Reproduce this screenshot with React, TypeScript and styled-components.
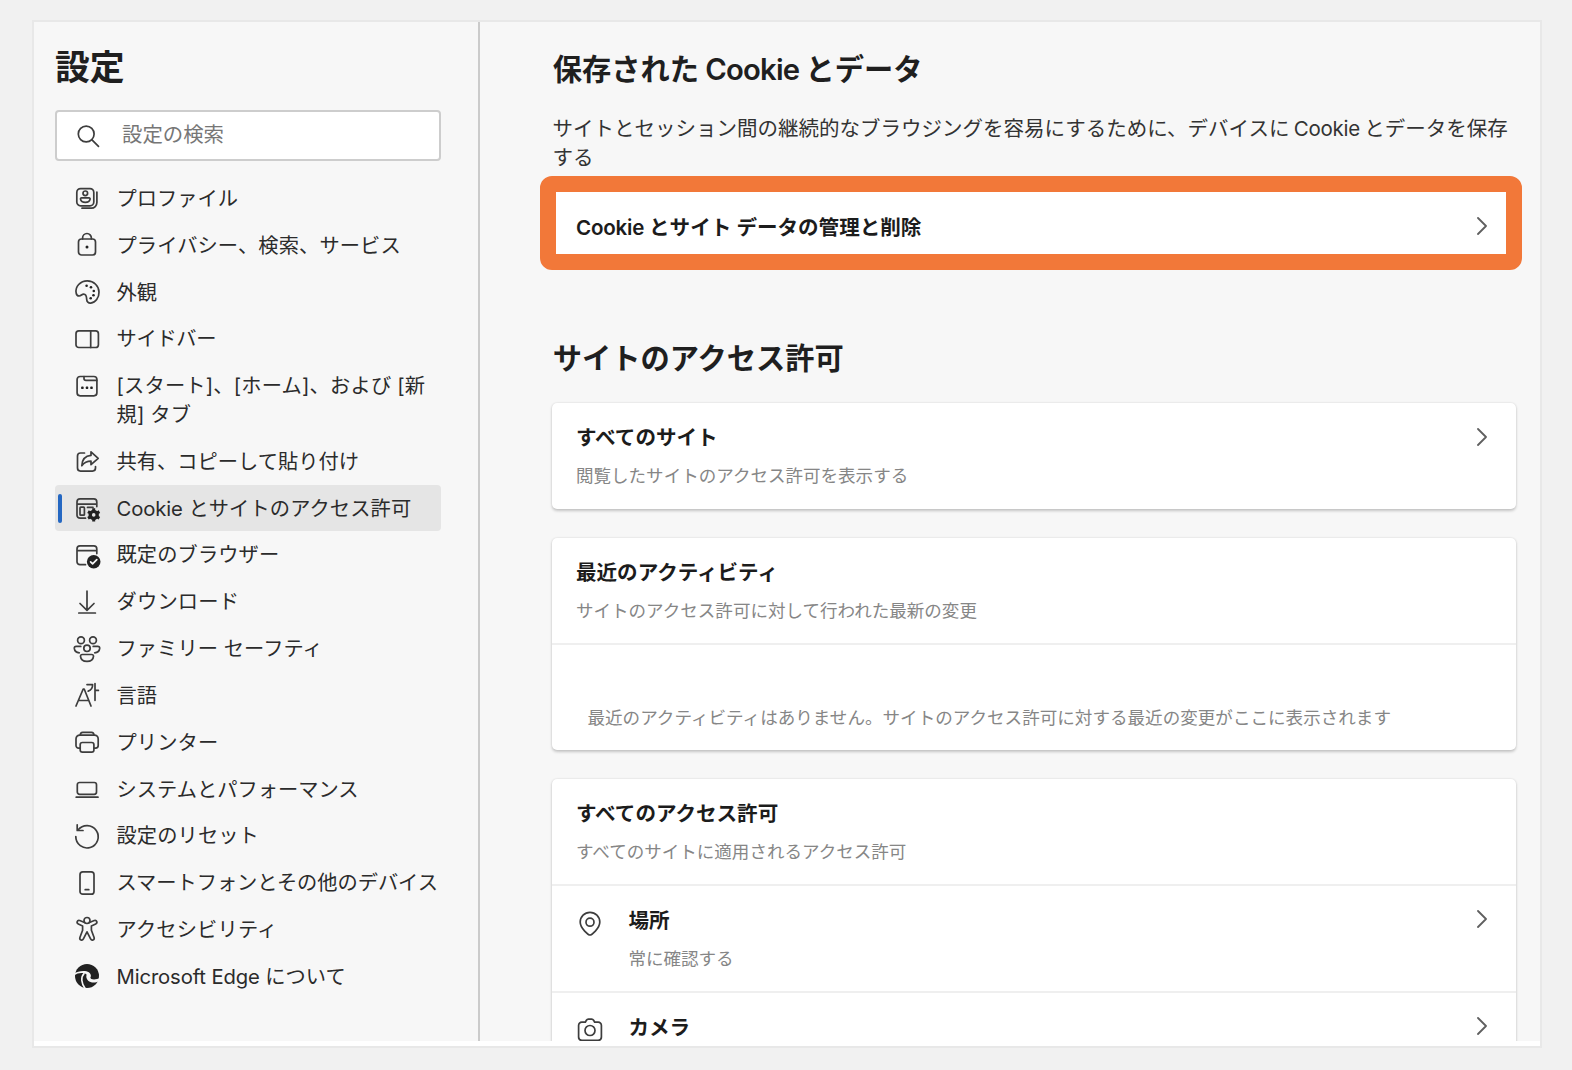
import React from "react";
import styled, { createGlobalStyle } from "styled-components";

const GlobalStyle = createGlobalStyle`
  *, *::before, *::after { box-sizing: border-box; }
  html, body { margin: 0; padding: 0; background: #f1f1f1; }
  body {
    height: 1070px;
    overflow: hidden;
    font-family: Inter, "Noto Sans CJK JP", sans-serif;
    color: #1f1f1f;
  }
  h1, h2, h3, p { margin: 0; }
`;

const Page = styled.div`
  width: 1572px;
  height: 1070px;
  padding: 20px 30px 22px 32px;
  background: #f1f1f1;
`;

const Frame = styled.div`
  width: 1510px;
  height: 1028px;
  padding-bottom: 5px;
  border: 2px solid #e8e8e8;
  background: #fff;
`;

const Shell = styled.div`
  display: flex;
  height: 1019px;
  overflow: hidden;
  background: #f7f7f7;
`;

const Sidebar = styled.aside`
  flex: none;
  width: 446px;
  padding: 20px 37px 0 21px;
  border-right: 2px solid #cbcbcb;
`;

const SidebarTitle = styled.h1`
  height: 50px;
  font-size: 34.8px;
  line-height: 50px;
  font-weight: 700;
`;

const SearchBox = styled.div`
  display: flex;
  align-items: center;
  width: 386px;
  height: 51px;
  margin-top: 18px;
  padding-left: 16px;
  border: 2px solid #cdcdcd;
  border-radius: 4px;
  background: #fff;
  font-size: 20.4px;
  color: #767676;
`;

const SearchLabel = styled.span`
  margin-left: 19px;
  padding-bottom: 5px;
`;

const Nav = styled.nav`
  display: flex;
  flex-direction: column;
  width: 386px;
  margin-top: 14px;
`;

const NavRow = styled.a<{ $active?: boolean }>`
  position: relative;
  display: flex;
  align-items: flex-start;
  padding: 9px 0 9px 17px;
  border-radius: 4px;
  background: ${(p) => (p.$active ? "#e5e5e5" : "transparent")};
`;

const ActiveMark = styled.span`
  position: absolute;
  left: 3px;
  top: 9px;
  width: 4px;
  height: 29px;
  border-radius: 2px;
  background: #2467c2;
`;

const NavIcon = styled.svg`
  flex: none;
  width: 30px;
  height: 30px;
  margin-top: -0.6px;
  margin-bottom: -0.6px;
  fill: none;
  stroke: #3d3d3d;
  stroke-width: 1.7;
  stroke-linecap: round;
  stroke-linejoin: round;
`;

const NavLabel = styled.span<{ $spacing?: number }>`
  width: 324px;
  margin: 1px 0 -1px 14.5px;
  font-size: 20.25px;
  line-height: 28.8px;
  letter-spacing: ${(p) => p.$spacing ?? 0}px;
  color: #2b2b2b;
  white-space: pre;
`;

const Main = styled.main`
  flex: 1;
  min-width: 0;
  padding: 28px 24px 0 72px;
`;

const SectionTitle = styled.h2<{ $top?: number }>`
  height: 40px;
  margin-top: ${(p) => p.$top ?? 0}px;
  padding-left: 0.8px;
  font-size: 29.25px;
  line-height: 40px;
  font-weight: 600;
  white-space: pre;
`;

const Latin = styled.span<{ $tight: number; $word?: number }>`
  letter-spacing: -${(p) => p.$tight}px;
  word-spacing: -${(p) => p.$word ?? 0}px;
`;

const Description = styled.div`
  height: 58px;
  margin-top: 24px;
  padding-left: 0.5px;
  font-size: 20.5px;
  line-height: 29px;
  color: #333;
  white-space: pre;
`;

const Highlight = styled.div`
  display: flex;
  align-items: center;
  justify-content: space-between;
  width: 982px;
  height: 94px;
  margin: 4px 0 0 -12px;
  padding: 9px 19px 0 20px;
  border: 16px solid #f27839;
  border-radius: 12px;
  background: #fff;
`;

const CardList = styled.div`
  display: flex;
  flex-direction: column;
  gap: 29px;
  margin-top: 24px;
`;

const Card = styled.section`
  width: 964px;
  border-radius: 5px;
  background: #fff;
  box-shadow: 0 1.5px 3px rgba(0, 0, 0, 0.2), 0 0 2px rgba(0, 0, 0, 0.08);
`;

const CardRow = styled.div<{ $divided?: boolean; $height?: number }>`
  display: flex;
  align-items: flex-start;
  height: ${(p) => p.$height ?? 106}px;
  padding: 18px 29px 0 24px;
  border-top: ${(p) => (p.$divided ? "2px solid #efefef" : "0")};
`;

const RowText = styled.div`
  flex: 1;
  padding-top: 1px;
`;

const RowTitle = styled.h3`
  font-size: 20.55px;
  line-height: 32px;
  font-weight: 600;
  color: #1c1c1c;
  white-space: pre;
`;

const RowSub = styled.p`
  margin-top: 8px;
  font-size: 17.55px;
  line-height: 28px;
  color: #868686;
  white-space: pre;
`;

const EmptyNote = styled.div`
  height: 107px;
  padding: 58.5px 0 0 35.5px;
  border-top: 2px solid #efefef;
  font-size: 17.57px;
  line-height: 28px;
  color: #868686;
  white-space: pre;
`;

const PermissionIcon = styled(NavIcon)`
  margin: 4px 23px 0 -0.6px;
`;

const ChevronSvg = styled.svg<{ $top?: number }>`
  flex: none;
  width: 10px;
  height: 18px;
  margin-top: ${(p) => p.$top ?? 7}px;
  fill: none;
  stroke: #5f5f5f;
  stroke-width: 1.8;
  stroke-linecap: round;
  stroke-linejoin: round;
`;

const Chevron = ({ top }: { top?: number }) => (
  <ChevronSvg $top={top} viewBox="0 0 10 18">
    <path d="M1 1 9 9 1 17" />
  </ChevronSvg>
);

const dark = { fill: "#222", stroke: "none" };

const icons: Record<string, React.ReactNode> = {
  profile: (
    <>
      <rect x="4.8" y="5.6" width="17" height="17.2" rx="3.8" />
      <path d="M24.9 9v10.6a5.6 5.6 0 0 1-5.6 5.6H10" />
      <circle cx="13.3" cy="10.3" r="2.3" />
      <path d="M9.6 14.8h7.4c.8 0 1.2.6 1.1 1.3-.4 2-2.3 3.2-4.8 3.2s-4.4-1.2-4.8-3.2c-.1-.7.3-1.3 1.1-1.3Z" />
    </>
  ),
  lock: (
    <>
      <rect x="6.5" y="9" width="17" height="16" rx="3" />
      <path d="M10.6 9V7.900a4.400 4.400 0 0 1 8.800 0V9" />
      <circle cx="15" cy="17" r="1.5" {...dark} />
    </>
  ),
  palette: (
    <>
      <path d="M4.2 16.200C2.800 9.500 8.500 3.900 15.300 3.900 22 4 26.800 9 27 15c.2 5.800-3.600 10.700-8.200 11.100-2.600.2-4-1.400-4.100-3.700-.1-2.700-.4-5.300-3-5.300-1.900 0-2.600 2-4.600 1.900-1.700-.1-2.600-1.400-2.900-2.800Z" />
      <g {...dark}>
        <circle cx="14.6" cy="8.8" r="1.3" />
        <circle cx="19" cy="10.3" r="1.3" />
        <circle cx="21.8" cy="14" r="1.3" />
        <circle cx="21.5" cy="18.3" r="1.3" />
        <circle cx="18.7" cy="21.3" r="1.3" />
      </g>
    </>
  ),
  sidebar: (
    <>
      <rect x="4" y="6.9" width="22.4" height="16.6" rx="2.8" />
      <path d="M18.7 7v16.4" />
    </>
  ),
  tab: (
    <>
      <rect x="5.1" y="5.5" width="19.8" height="19.3" rx="3" />
      <path d="M12 5.7v1.8c0 1.2.7 1.9 1.9 1.9h10.8" />
      <g {...dark}>
        <rect x="9.2" y="15.6" width="2.4" height="2.4" rx=".6" />
        <rect x="13.8" y="15.6" width="2.4" height="2.4" rx=".6" />
        <rect x="18.3" y="15.6" width="2.4" height="2.4" rx=".6" />
      </g>
    </>
  ),
  share: (
    <>
      <path d="M12.5 7H8.500a3 3 0 0 0-3 3v12.100a3 3 0 0 0 3 3h12a3 3 0 0 0 3-3v-1.600" />
      <path d="m19 5.800 7.200 6.500-7.200 6.400v-3.500c-4 0-6.700 1.200-9.200 4.500.3-6 3.500-9.800 9.200-10.300Z" />
    </>
  ),
  cookies: (
    <>
      <path d="M13.5 25.200H8a3 3 0 0 1-3-3V8.900a3 3 0 0 1 3-3h13.800a3 3 0 0 1 3 3v4.700M5 11.200h19.800" />
      <rect x="8" y="14.2" width="4.4" height="8" rx=".8" />
      <path d="M15.5 14.400h5.500" />
      <circle cx="21.7" cy="21.9" r="3.5" fill="none" stroke="#222" strokeWidth="3.400" />
      <path
        stroke="#222"
        strokeWidth="3"
        strokeLinecap="butt"
        d="M21.700 18.500v-3.200M21.700 25.300v3.200M24.600 20.200l2.800-1.600M18.800 23.600l-2.800 1.600M24.600 23.600l2.800 1.600M18.800 20.200l-2.800-1.600"
      />
    </>
  ),
  browser: (
    <>
      <path d="M13.5 24.700H8a3 3 0 0 1-3-3V8.900a3 3 0 0 1 3-3h13.800a3 3 0 0 1 3 3v4.700M5 10.700h19.800" />
      <circle cx="21.7" cy="21.7" r="6.8" {...dark} />
      <path d="m18.600 21.900 2 2 4.200-4.200" stroke="#f7f7f7" />
    </>
  ),
  download: <path d="M15 4.200v19M8 16.500l7 6.800 7-6.800M6.800 26h16.600" />,
  family: (
    <>
      <circle cx="9" cy="6.3" r="3.4" />
      <circle cx="21" cy="6.3" r="3.4" />
      <circle cx="15" cy="14.3" r="3.2" />
      <path d="M8.800 12.400H4.200c-1.300 0-2 .8-1.900 2 .3 2.600 2.300 4.200 5 4.400M21.200 12.400h4.600c1.300 0 2 .8 1.900 2-.3 2.600-2.300 4.200-5 4.400" />
      <path d="M10.300 20.500h9.400c1.200 0 1.900.7 1.800 1.800-.3 3.100-3 5-6.500 5s-6.200-1.900-6.500-5c-.1-1.100.6-1.800 1.800-1.800Z" />
    </>
  ),
  language: (
    <>
      <path d="m4 26 7.200-17h1L19 26M6.500 20.500h10.400" />
      <path d="M15 4.600h5.600c.1 3.200-1.400 5.400-4.400 6.500M23 3.500v16.800M23 10.400h3.400" />
    </>
  ),
  printer: (
    <>
      <path d="M8 21.200H6.600A2.600 2.600 0 0 1 4 18.600v-6.700a3.800 3.800 0 0 1 3.800-3.800h14.600a3.800 3.800 0 0 1 3.800 3.800v6.700a2.600 2.600 0 0 1-2.600 2.600H22" />
      <path d="M8.300 8c0-1.800.8-2.700 2.400-2.700h8.800c1.600 0 2.400.9 2.400 2.700" />
      <rect x="8.2" y="15.5" width="13.7" height="9.6" rx="2.2" />
    </>
  ),
  laptop: (
    <>
      <rect x="5.3" y="8.5" width="19.2" height="11.9" rx="2.3" />
      <path d="M4.200 23.200h21.800" />
    </>
  ),
  reset: (
    <>
      <path d="M6.200 8.800A11.200 11.200 0 1 1 3.800 15.600" />
      <path d="M5.200 3.800v5.700h5.800" />
    </>
  ),
  phone: (
    <>
      <rect x="8" y="3.9" width="14" height="22.3" rx="2.8" />
      <path d="M13.200 21.700h3.600" />
    </>
  ),
  accessibility: (
    <>
      <circle cx="15" cy="6.5" r="3" />
      <path d="M12 8.200 7.700 6.500c-2.500-.8-3.600 2.400-1.400 3.400l4.300 2v4.300l-2.700 7.300c-.7 2.500 2.400 3.600 3.500 1.400L15 17.800l3.600 7.100c1.100 2.200 4.200 1.100 3.500-1.400l-2.700-7.300v-4.300l4.300-2c2.200-1 1.100-4.200-1.400-3.400L18 8.200" />
    </>
  ),
  edge: (
    <>
      <circle cx="15" cy="15" r="12" {...dark} />
      <path
        fill="#f7f7f7"
        stroke="none"
        d="M2 12.400C5.800 9.800 13.500 9 16.800 11.200 19.300 13 19.200 15.300 18.400 16.600 18.200 18.700 23.500 19.600 28.500 16.600L27 20.200C23.500 22.200 18.500 22 16.200 19.800 14.400 18 13.900 15.800 14.600 13.600 11.500 11.400 6 11.600 2 14.600Z"
      />
      <path stroke="#f7f7f7" strokeWidth="1.6" d="M12 12.600C8.700 15.800 9 22.300 13.400 28" />
    </>
  ),
  pin: (
    <>
      <path d="M15 27c-1.200 0-9.800-6.200-9.800-12.900a9.800 9.800 0 0 1 19.600 0C24.800 20.800 16.200 27 15 27Z" />
      <circle cx="15" cy="14.2" r="4" />
    </>
  ),
  camera: (
    <>
      <path d="M10.300 7.200 11.400 5.300c.5-.8 1-1.100 1.900-1.100h3.400c.9 0 1.400.3 1.900 1.100l1.100 1.900h3.500a3.200 3.200 0 0 1 3.200 3.200v11.700a3.200 3.200 0 0 1-3.200 3.200H6.800a3.200 3.200 0 0 1-3.200-3.200V10.400a3.200 3.200 0 0 1 3.200-3.200Z" />
      <circle cx="15" cy="15.5" r="5" />
    </>
  ),
  search: (
    <>
      <circle cx="13.2" cy="13" r="7.9" />
      <path d="m19 18.900 6.500 6.400" />
    </>
  ),
};

type NavItem = {
  icon: string;
  label: React.ReactNode;
  spacing?: number;
  active?: boolean;
};

const navItems: NavItem[] = [
  { icon: "profile", label: "プロファイル" },
  { icon: "lock", label: "プライバシー、検索、サービス", spacing: 0.1 },
  { icon: "palette", label: "外観" },
  { icon: "sidebar", label: "サイドバー", spacing: -0.3 },
  { icon: "tab", label: "[スタート]、[ホーム]、および [新\n規] タブ", spacing: 0.18 },
  { icon: "share", label: "共有、コピーして貼り付け" },
  {
    icon: "cookies",
    label: (
      <>
        <Latin $tight={0.1}>Cookie </Latin>とサイトのアクセス許可
      </>
    ),
    spacing: 0.1,
    active: true,
  },
  { icon: "browser", label: "既定のブラウザー", spacing: 0.1 },
  { icon: "download", label: "ダウンロード", spacing: 0.2 },
  { icon: "family", label: "ファミリー セーフティ", spacing: 0.05 },
  { icon: "language", label: "言語" },
  { icon: "printer", label: "プリンター", spacing: 0.1 },
  { icon: "laptop", label: "システムとパフォーマンス" },
  { icon: "reset", label: "設定のリセット", spacing: 0.1 },
  { icon: "phone", label: "スマートフォンとその他のデバイス", spacing: -0.05 },
  { icon: "accessibility", label: "アクセシビリティ", spacing: 0.15 },
  {
    icon: "edge",
    label: (
      <>
        <Latin $tight={0.12}>Microsoft Edge </Latin>について
      </>
    ),
  },
];

export default function App() {
  return (
    <Page>
      <GlobalStyle />
      <Frame>
        <Shell>
          <Sidebar>
            <SidebarTitle>設定</SidebarTitle>
            <SearchBox>
              <NavIcon viewBox="0 0 30 30">{icons.search}</NavIcon>
              <SearchLabel>設定の検索</SearchLabel>
            </SearchBox>
            <Nav>
              {navItems.map((item) => (
                <NavRow key={item.icon} $active={item.active}>
                  {item.active && <ActiveMark />}
                  <NavIcon viewBox="0 0 30 30">{icons[item.icon]}</NavIcon>
                  <NavLabel $spacing={item.spacing}>{item.label}</NavLabel>
                </NavRow>
              ))}
            </Nav>
          </Sidebar>
          <Main>
            <SectionTitle>
              保存された<Latin $tight={0.8} $word={0.3}>{" Cookie "}</Latin>とデータ
            </SectionTitle>
            <Description>
              <p>
                サイトとセッション間の継続的なブラウジングを容易にするために、デバイスに
                <Latin $tight={0.25} $word={1.2}>{" Cookie "}</Latin>
                とデータを保存
              </p>
              <p>する</p>
            </Description>
            <Highlight>
              <RowTitle>
                <Latin $tight={0.22}>Cookie </Latin>とサイト データの管理と削除
              </RowTitle>
              <Chevron top={-3} />
            </Highlight>
            <SectionTitle $top={69}>サイトのアクセス許可</SectionTitle>
            <CardList>
              <Card>
                <CardRow>
                  <RowText>
                    <RowTitle>すべてのサイト</RowTitle>
                    <RowSub>閲覧したサイトのアクセス許可を表示する</RowSub>
                  </RowText>
                  <Chevron />
                </CardRow>
              </Card>
              <Card>
                <CardRow $height={105}>
                  <RowText>
                    <RowTitle>最近のアクティビティ</RowTitle>
                    <RowSub>サイトのアクセス許可に対して行われた最新の変更</RowSub>
                  </RowText>
                </CardRow>
                <EmptyNote>
                  最近のアクティビティはありません。サイトのアクセス許可に対する最近の変更がここに表示されます
                </EmptyNote>
              </Card>
              <Card>
                <CardRow $height={105}>
                  <RowText>
                    <RowTitle>すべてのアクセス許可</RowTitle>
                    <RowSub>すべてのサイトに適用されるアクセス許可</RowSub>
                  </RowText>
                </CardRow>
                <CardRow $divided $height={107}>
                  <PermissionIcon viewBox="0 0 30 30">{icons.pin}</PermissionIcon>
                  <RowText>
                    <RowTitle>場所</RowTitle>
                    <RowSub>常に確認する</RowSub>
                  </RowText>
                  <Chevron top={6} />
                </CardRow>
                <CardRow $divided>
                  <PermissionIcon viewBox="0 0 30 30">{icons.camera}</PermissionIcon>
                  <RowText>
                    <RowTitle>カメラ</RowTitle>
                  </RowText>
                  <Chevron top={6} />
                </CardRow>
              </Card>
            </CardList>
          </Main>
        </Shell>
      </Frame>
    </Page>
  );
}
